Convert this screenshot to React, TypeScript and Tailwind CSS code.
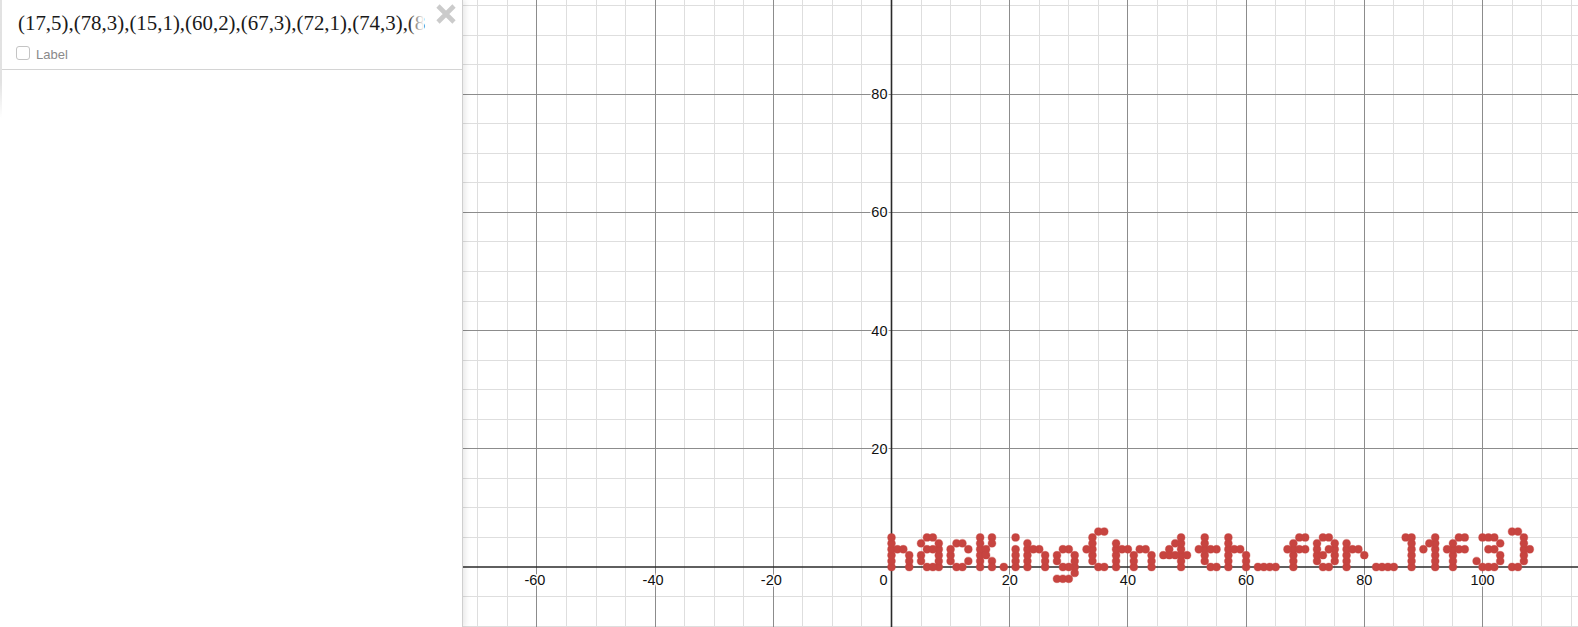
import React from 'react';

const UNIT = 5.91;
const OX = 428.5; // x of the y axis inside the graph
const OY = 567;
const GRAPH_W = 1115;
const GRAPH_H = 627;

const sx = (n: number) => OX + n * UNIT;
const sy = (n: number) => OY - n * UNIT;

const col = (x: number, from: number, to: number) => {
  const out: number[][] = [];
  for (let y = from; y <= to; y++) out.push([x, y]);
  return out;
};

const points: number[][] = [
  // h
  ...col(0, 0, 5), [1, 3], [2, 3], ...col(3, 0, 2),
  // a
  [5, 4], [6, 5], [7, 5], ...col(8, 0, 4), [6, 3], [7, 3], [5, 2], [5, 1], [6, 0], [7, 0],
  // c
  [11, 4], [12, 4], ...col(10, 1, 3), [13, 3], [13, 1], [11, 0], [12, 0],
  // k
  ...col(15, 0, 5), [17, 5], [17, 4], [16, 3], [16, 2], [17, 1], [17, 0],
  // .
  [19, 0],
  // i
  [21, 5], ...col(21, 0, 3),
  // n
  ...col(23, 0, 4), [24, 3], [25, 3], ...col(26, 0, 2),
  // g
  [29, 3], [30, 3], [28, 2], [28, 1], ...col(31, -1, 2), [29, 0], [30, 0], [28, -2], [29, -2], [30, -2],
  // {
  [35, 6], [36, 6], ...col(34, 1, 5), [33, 3], [35, 0], [36, 0],
  // m
  ...col(38, 0, 4), [39, 3], [40, 3], ...col(41, 0, 2), [42, 3], [43, 3], ...col(44, 0, 2),
  // 4
  ...col(49, 0, 5), [48, 4], [47, 3], [46, 2], [47, 2], [48, 2], [50, 2],
  // t
  ...col(53, 1, 5), [52, 3], [54, 3], [55, 3], [54, 0], [55, 0],
  // h
  ...col(57, 0, 5), [58, 3], [59, 3], ...col(60, 0, 2),
  // _
  [62, 0], [63, 0], [64, 0], [65, 0],
  // f
  ...col(68, 0, 4), [69, 5], [70, 5], [67, 3], [69, 3], [70, 3],
  // 0
  [73, 5], [74, 5], ...col(72, 1, 4), ...col(75, 1, 4), [74, 3], [73, 2], [73, 0], [74, 0],
  // r
  ...col(77, 0, 4), [78, 3], [79, 3], [80, 2],
  // _
  [82, 0], [83, 0], [84, 0], [85, 0],
  // l
  [87, 5], ...col(88, 0, 5),
  // 1
  ...col(92, 0, 5), [91, 4], [90, 3],
  // f
  ...col(95, 0, 4), [96, 5], [97, 5], [94, 3], [96, 3], [97, 3],
  // 3
  [100, 5], [101, 5], [102, 5], [103, 4], [101, 3], [102, 3], [103, 2], [103, 1], [99, 1], [100, 0], [101, 0], [102, 0],
  // }
  [105, 6], [106, 6], ...col(107, 1, 5), [108, 3], [105, 0], [106, 0],
];

const range = (a: number, b: number, step: number) => {
  const out: number[] = [];
  for (let v = a; v <= b; v += step) out.push(v);
  return out;
};

const crisp = (v: number) => Math.floor(v) + 0.5;

const Graph = () => {
  const xMinor = range(-70, 115, 5).filter((n) => n % 20 !== 0);
  const yMinor = range(-10, 95, 5).filter((n) => n % 20 !== 0);
  const xMajor = range(-60, 100, 20).filter((n) => n !== 0);
  const yMajor = [20, 40, 60, 80];

  return (
    <svg width={GRAPH_W} height={GRAPH_H} className="block">
      {/* grid */}
      {xMinor.map((n) => (
        <line key={n} x1={crisp(sx(n))} x2={crisp(sx(n))} y1={0} y2={GRAPH_H} stroke="#dedede" />
      ))}
      {yMinor.map((n) => (
        <line key={n} x1={0} x2={GRAPH_W} y1={crisp(sy(n))} y2={crisp(sy(n))} stroke="#dedede" />
      ))}
      {xMajor.map((n) => (
        <line key={n} x1={crisp(sx(n))} x2={crisp(sx(n))} y1={0} y2={GRAPH_H} stroke="#8c8c8c" />
      ))}
      {yMajor.map((n) => (
        <line key={n} x1={0} x2={GRAPH_W} y1={crisp(sy(n))} y2={crisp(sy(n))} stroke="#8c8c8c" />
      ))}

      {/* axes */}
      <line x1={OX} x2={OX} y1={0} y2={GRAPH_H} stroke="#2a2a2a" strokeWidth={1.6} />
      <line x1={0} x2={GRAPH_W} y1={OY} y2={OY} stroke="#2a2a2a" strokeWidth={1.6} />

      {/* labels */}
      <g
        fontFamily='"Liberation Sans", Arial, sans-serif'
        fontSize={14.5}
        fill="#111"
        stroke="#fff"
        strokeWidth={3}
        paintOrder="stroke"
      >
        {xMajor.map((n) => (
          <text key={n} x={sx(n) - (n < 0 ? 2 : 0)} y={OY + 18} textAnchor="middle">
            {n}
          </text>
        ))}
        <text x={OX - 8} y={OY + 18} textAnchor="middle">
          0
        </text>
        {yMajor.map((n) => (
          <text key={n} x={OX - 4} y={sy(n) + 5} textAnchor="end">
            {n}
          </text>
        ))}
      </g>

      {/* points */}
      {points.map(([x, y], i) => (
        <circle
          key={i}
          cx={sx(x)}
          cy={sy(y)}
          r={3.9}
          fill="#c74440"
          stroke="#c74440"
          strokeOpacity={0.35}
          strokeWidth={1.2}
        />
      ))}
    </svg>
  );
};

const ExpressionPanel = () => (
  <aside className="relative z-10 h-full w-[463px] shrink-0 border-r border-[#cfcfcf] bg-white shadow-[2px_0_6px_rgba(0,0,0,0.1)]">
    <div className="relative h-[70px] border-b border-[#d4d4d4]">
      <div className="whitespace-nowrap pl-[18px] pt-[9px] font-['Liberation_Serif',serif] text-[20.9px] leading-[28px] text-[#1a1a1a]">
        (17,5),(78,3),(15,1),(60,2),(67,3),(72,1),(74,3),(8
      </div>
      <div className="absolute left-[408px] top-[8px] h-[30px] w-[16px] bg-linear-to-r from-transparent to-white" />
      <label className="mt-[9px] ml-4 flex items-start gap-[6px] font-['Liberation_Sans',sans-serif] text-[13px] leading-[16px] text-[#8a8a8a]">
        <span className="h-[14px] w-[14px] rounded-[3px] border border-[#c4c4c4] bg-white" />
        <span className="pt-px">Label</span>
      </label>
      <svg width="20" height="20" viewBox="0 0 20 20" className="absolute left-[436px] top-[4px]">
        <path d="M2 2 L18 18 M18 2 L2 18" stroke="#cbcbcb" strokeWidth="4.6" fill="none" />
      </svg>
    </div>
    <div className="absolute left-0 top-0 h-[118px] w-[2px] bg-linear-to-b from-[#e2e2e2] from-70% to-transparent" />
  </aside>
);

export default function App() {
  return (
    <div className="flex h-[627px] w-[1578px] overflow-hidden bg-white">
      <ExpressionPanel />
      <main className="flex-1">
        <Graph />
      </main>
    </div>
  );
}
